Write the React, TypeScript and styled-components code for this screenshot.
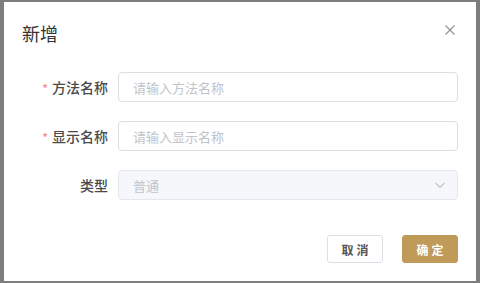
import React from 'react'
import styled, { createGlobalStyle } from 'styled-components'

const GlobalStyle = createGlobalStyle`
  html, body {
    margin: 0;
    padding: 0;
    background: #7d7d7d;
    font-family: "Noto Sans CJK SC", "Noto Sans", "Liberation Sans", sans-serif;
  }
  * { box-sizing: border-box; }
`

const Page = styled.div`
  width: 480px;
  height: 283px;
  padding: 2px 4px 2px 4px;
`

const Dialog = styled.div`
  width: 472px;
  height: 279px;
  background: #fff;
  display: flex;
  flex-direction: column;
  padding: 0 18px;
`

const Header = styled.div`
  display: flex;
  align-items: center;
  justify-content: space-between;
  height: 62px;
`

const Title = styled.div`
  font-size: 18px;
  color: #333;
  line-height: 24px;
`

const CloseButton = styled.button`
  border: none;
  background: none;
  padding: 0;
  margin-right: 2px;
  margin-top: -6px;
  width: 12px;
  height: 12px;
  display: flex;
  cursor: pointer;
`

const Form = styled.div`
  display: flex;
  flex-direction: column;
  gap: 19px;
  margin-top: 8px;
`

const Row = styled.div`
  display: flex;
  align-items: center;
`

const Label = styled.label`
  width: 96px;
  padding-right: 10px;
  text-align: right;
  font-size: 14px;
  color: #4a4a4a;
  font-weight: 500;
  flex-shrink: 0;
`

const Star = styled.span`
  color: #f78989;
  font-size: 12px;
  margin-right: 4px;
`

const Input = styled.input<{ disabled?: boolean }>`
  flex: 1;
  height: 30px;
  border: 1px solid ${({ disabled }) => (disabled ? '#e4e7ed' : '#dcdfe6')};
  border-radius: 4px;
  background: ${({ disabled }) => (disabled ? '#f5f7fa' : '#fff')};
  padding: 0 14px;
  font-size: 13px;
  font-family: inherit;
  color: #c0c4cc;
  outline: none;
  &::placeholder {
    color: #c0c4cc;
  }
`

const SelectBox = styled.div`
  flex: 1;
  position: relative;
  display: flex;
`

const Chevron = styled.span`
  position: absolute;
  right: 12px;
  top: 10px;
  display: flex;
`

const Footer = styled.div`
  margin-top: auto;
  margin-bottom: 18px;
  display: flex;
  justify-content: flex-end;
  gap: 19px;
`

const Button = styled.button<{ primary?: boolean }>`
  width: 56px;
  height: 28px;
  border-radius: 3px;
  border: 1px solid ${({ primary }) => (primary ? '#c09a58' : '#dcdfe6')};
  background: ${({ primary }) => (primary ? '#c09a58' : '#fff')};
  color: ${({ primary }) => (primary ? '#fff' : '#555')};
  font-family: inherit;
  font-size: 12px;
  font-weight: 600;
  letter-spacing: 3px;
  padding: 0 0 0 3px;
  cursor: pointer;
`

export default function App() {
  return (
    <>
      <GlobalStyle />
      <Page>
        <Dialog>
          <Header>
            <Title>新增</Title>
            <CloseButton aria-label="close">
              <svg width="12" height="12" viewBox="0 0 12 12">
                <path d="M1.5 1.5 L10.5 10.5 M10.5 1.5 L1.5 10.5" stroke="#909399" strokeWidth="1.2" fill="none" />
              </svg>
            </CloseButton>
          </Header>
          <Form>
            <Row>
              <Label><Star>*</Star>方法名称</Label>
              <Input placeholder="请输入方法名称" />
            </Row>
            <Row>
              <Label><Star>*</Star>显示名称</Label>
              <Input placeholder="请输入显示名称" />
            </Row>
            <Row>
              <Label>类型</Label>
              <SelectBox>
                <Input disabled value="普通" readOnly />
                <Chevron>
                  <svg width="12" height="10" viewBox="0 0 12 10">
                    <path d="M1.5 3 L6 7.5 L10.5 3" stroke="#c0c4cc" strokeWidth="1.2" fill="none" />
                  </svg>
                </Chevron>
              </SelectBox>
            </Row>
          </Form>
          <Footer>
            <Button>取消</Button>
            <Button primary>确定</Button>
          </Footer>
        </Dialog>
      </Page>
    </>
  )
}
